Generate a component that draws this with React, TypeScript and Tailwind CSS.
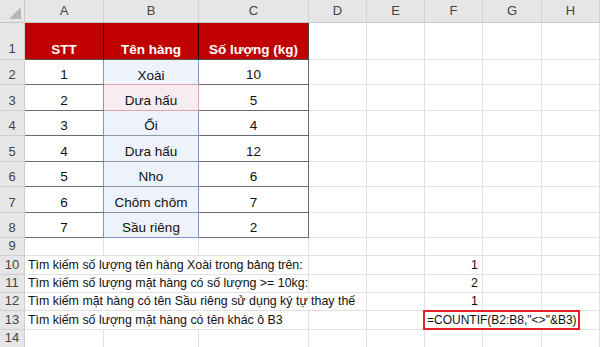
import React from 'react';

const cols = ['A', 'B', 'C', 'D', 'E', 'F', 'G', 'H'];

const items = [
  { stt: '1', name: 'Xoài', qty: '10' },
  { stt: '2', name: 'Dưa hấu', qty: '5' },
  { stt: '3', name: 'Ổi', qty: '4' },
  { stt: '4', name: 'Dưa hấu', qty: '12' },
  { stt: '5', name: 'Nho', qty: '6' },
  { stt: '6', name: 'Chôm chôm', qty: '7' },
  { stt: '7', name: 'Sầu riêng', qty: '2' },
];

const notes = [
  { text: 'Tìm kiếm số lượng tên hàng Xoài trong bảng trên:', value: '1', wide: false },
  { text: 'Tìm kiếm số lượng mặt hàng có số lượng >= 10kg:', value: '2', wide: false },
  { text: 'Tìm kiếm mặt hàng có tên Sầu riêng sử dụng ký tự thay thế', value: '1', wide: true },
];

const grid = 'border-r border-b border-[#e1e1e1]';

function RowHead({ n, className = 'pb-[3px]' }: { n: number; className?: string }) {
  return (
    <div className={`flex items-end justify-center bg-[#e6e6e6] border-r border-b border-[#cfcfcf] leading-none text-[13px] text-[#444] ${className}`}>
      {n}
    </div>
  );
}

export default function App() {
  return (
    <div
      className="w-[600px] h-[347px] overflow-hidden bg-white text-[#111]"
      style={{ fontFamily: '"Liberation Sans", Arial, sans-serif' }}
    >
      <div className="grid grid-cols-[25px_79px_95px_110px_58px_58px_58px_59px_58px] grid-rows-[23px_37px_25px_26px_25px_26px_25px_26px_25px_18px_19px_18px_18px_19px_18px]">
        {/* column headers */}
        <div className="relative bg-[#e6e6e6] border-r border-b border-[#c6c6c6]">
          <div className="absolute right-[3px] bottom-[3px] w-0 h-0 border-l-[12px] border-l-transparent border-b-[12px] border-b-[#b7b7b7]" />
        </div>
        {cols.map((c) => (
          <div
            key={c}
            className="flex items-center justify-center bg-[#e6e6e6] border-r border-b border-r-[#d2d2d2] border-b-[#c6c6c6] text-[13px] text-[#444]"
          >
            {c}
          </div>
        ))}

        {/* row 1 */}
        <RowHead n={1} className="pb-[4px]" />
        {['STT', 'Tên hàng', 'Số lượng (kg)'].map((t, i) => (
          <div
            key={t}
            className={`flex items-end justify-center pb-[3px] leading-none bg-[#c00000] text-white font-bold text-[13.5px] border-b border-r ${i === 2 ? 'border-r-[#444]' : 'border-r-[#2a0000]'} border-b-[#555]`}
          >
            {t}
          </div>
        ))}
        {[0, 1, 2, 3, 4].map((i) => (
          <div key={i} className={grid} />
        ))}

        {/* rows 2-8 */}
        {items.map((it, i) => {
          const last = i === items.length - 1;
          const pink = i === 1;
          return (
            <React.Fragment key={i}>
              <RowHead n={i + 2} />
              <div className="flex items-end justify-center pb-[3px] leading-none text-[13.5px] border-b border-r border-b-[#6b6b6b] border-r-[#7d98c9]">
                {it.stt}
              </div>
              <div
                className={`flex items-end justify-center pb-[3px] leading-none text-[13.5px] border-r ${
                  pink
                    ? 'bg-[#f7edf0] border-b border-t border-[#d9a3b2] -mt-[1px]'
                    : `bg-[#eef2fa] border-b border-r-[#7d98c9] ${last ? 'border-b-[#7d98c9]' : 'border-b-[#8d96aa]'}`
                } ${i === 0 ? 'border-b-0' : ''}`}
              >
                {it.name}
              </div>
              <div className="flex items-end justify-center pb-[3px] leading-none text-[13.5px] border-b border-r border-[#6b6b6b]">
                {it.qty}
              </div>
              {[0, 1, 2, 3, 4].map((k) => (
                <div key={k} className={grid} />
              ))}
            </React.Fragment>
          );
        })}

        {/* row 9 */}
        <RowHead n={9} />
        {cols.map((c) => (
          <div key={c} className={grid} />
        ))}

        {/* rows 10-12 */}
        {notes.map((r, i) => (
          <React.Fragment key={i}>
            <RowHead n={10 + i} />
            <div
              className={`${r.wide ? 'col-span-4' : 'col-span-3'} flex items-center pl-[3px] text-[12.4px] whitespace-nowrap border-b border-r border-[#e1e1e1]`}
            >
              {r.text}
            </div>
            {!r.wide && <div className={grid} />}
            <div className={grid} />
            <div className={`${grid} flex items-center justify-end pr-[4px] text-[12.4px]`}>{r.value}</div>
            <div className={grid} />
            <div className={grid} />
          </React.Fragment>
        ))}

        {/* row 13 */}
        <RowHead n={13} />
        <div className="col-span-3 flex items-center pl-[3px] text-[12.4px] whitespace-nowrap border-b border-r border-[#e1e1e1]">
          Tìm kiếm số lượng mặt hàng có tên khác ô B3
        </div>
        <div className={grid} />
        <div className={grid} />
        <div className="col-span-3 relative border-b border-r border-[#e1e1e1]">
          <div className="absolute left-[-2px] top-[-1px] w-[157px] h-[20px] border-2 border-[#e8202a] flex items-center pl-[2px] text-[12px] whitespace-nowrap bg-white">
            =COUNTIF(B2:B8,"&lt;&gt;"&amp;B3)
          </div>
        </div>

        {/* row 14 */}
        <RowHead n={14} />
        {cols.map((c) => (
          <div key={c} className={grid} />
        ))}
      </div>
    </div>
  );
}
